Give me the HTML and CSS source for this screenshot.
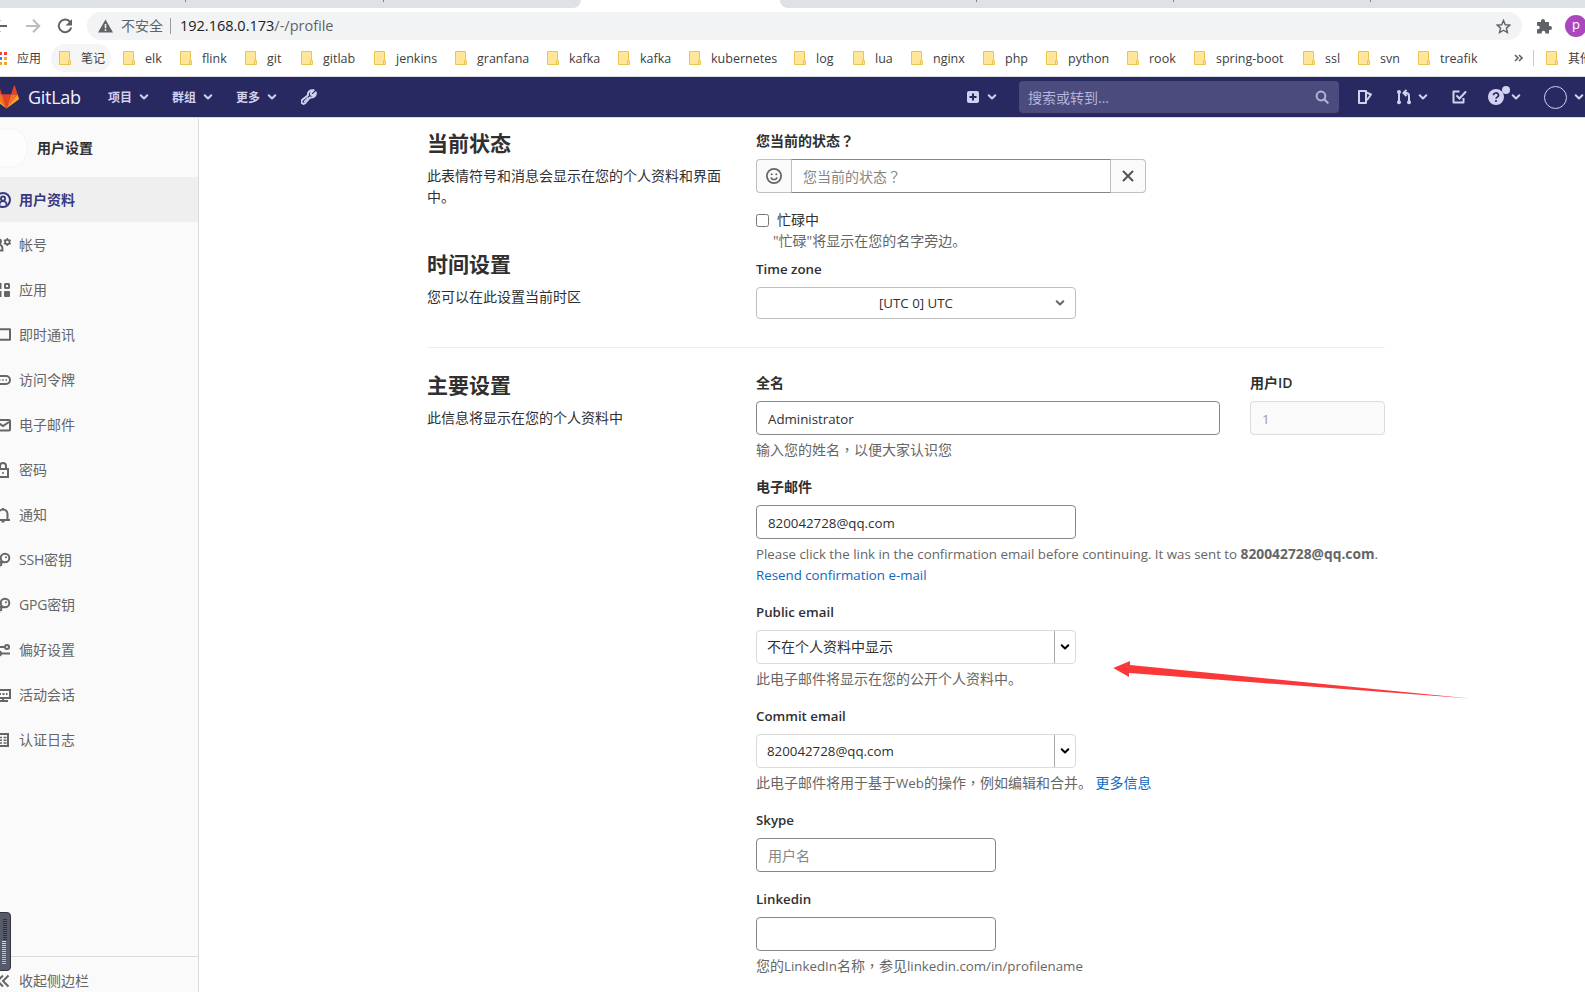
FILE: index.html
```
<!DOCTYPE html>
<html lang="zh-CN">
<head>
    <meta charset="UTF-8">
    <meta name="viewport" content="width=device-width, initial-scale=1.0">
    <title>用户资料 · GitLab</title>
    <link rel="stylesheet" href="styles.css">
</head>
<body>

    <!-- shared icons -->
    <svg class="sprite" width="0" height="0">
        <symbol id="chevron" viewBox="0 0 10 10"><path d="M1.7 3.3 5 6.500l3.300-3.200" fill="none" stroke="currentColor" stroke-width="2" stroke-linecap="round" stroke-linejoin="round"/></symbol>
        <symbol id="folder" viewBox="0 0 12 14"><path d="M.5.5h10v9.200h1v3.800H.5z" fill="#ffe699" stroke="#e9c44f"/><path d="M9.500 13V9.700h1" fill="none" stroke="#e9c44f"/></symbol>
        <symbol id="key" viewBox="0 0 16 16"><circle cx="10" cy="6" r="4.300" fill="none" stroke="currentColor" stroke-width="2"/><circle cx="11" cy="5.200" r="1" fill="currentColor"/><path d="M6.600 8.800 2 13.200V15h2.400v-1.800h1.800v-2l1.800-1" fill="none" stroke="currentColor" stroke-width="1.700"/></symbol>
    </svg>

    <div class="tabstrip">
        <div class="tabs tabs-left"><i></i><i></i></div>
        <div class="tabs tabs-right"><i></i><i></i><i></i></div>
    </div>

    <div class="toolbar">
        <div class="toolbar-nav">
            <svg class="back" width="16" height="16" viewBox="0 0 16 16"><path d="M15 8H2M8 1.700 1.700 8 8 14.300" fill="none" stroke="#5f6368" stroke-width="2"/></svg>
            <svg class="forward" width="16" height="16" viewBox="0 0 16 16"><path d="M1 8h13M8 1.700 14.300 8 8 14.300" fill="none" stroke="#babcbe" stroke-width="2"/></svg>
            <svg class="reload" width="16" height="16" viewBox="0 0 16 16"><path d="M13.200 4.200A6.300 6.300 0 1 0 14.200 9.500" fill="none" stroke="#5f6368" stroke-width="2"/><path d="M15 1v6.400H8.600z" fill="#5f6368"/></svg>
        </div>
        <div class="omnibox">
            <svg width="15" height="14" viewBox="0 0 15 14"><path d="M7.500.5 15 13.500H0z" fill="#5f6368"/><path d="M7.500 5v4.300M7.500 10.300v1.600" stroke="#f1f3f4" stroke-width="1.600"/></svg>
            <span class="insecure">不安全</span>
            <span class="url">192.168.0.173<em>/-/profile</em></span>
            <svg class="star" width="15" height="15" viewBox="0 0 16 16"><path d="m8 1.500 1.900 4.600 4.900.4-3.700 3.200 1.100 4.800L8 12l-4.200 2.500 1.100-4.800L1.200 6.500l4.900-.4z" fill="none" stroke="#5f6368" stroke-width="1.500"/></svg>
        </div>
        <svg class="puzzle" width="16" height="16" viewBox="0 0 16 16"><path d="M1 4h4V3a2 2 0 0 1 4 0v1h4v4h1a2 2 0 0 1 0 4h-1v3.500H9.300v-1a1.800 1.800 0 0 0-3.600 0v1H1v-4.200h1a1.700 1.700 0 0 0 0-3.500H1z" fill="#5f6368"/></svg>
        <div class="profile">p</div>
    </div>

    <div class="bookmarks">
        <div class="apps">
            <svg width="8" height="13" viewBox="0 0 8 13"><path d="M0 0h2v3H0zM4 0h3v3H4z" fill="#ee4337"/><path d="M0 5h2v3H0z" fill="#2a84f5"/><path d="M4 5h3v3H4zM0 10h2v3H0zM4 10h3v3H4z" fill="#f5a623"/></svg>
            <span>应用</span>
        </div>
        <div class="bookmark-list">
            <a class="bookmark hover"><svg width="12" height="14"><use href="#folder"/></svg><span class="cn">笔记</span></a>
            <a class="bookmark"><svg width="12" height="14"><use href="#folder"/></svg><span>elk</span></a>
            <a class="bookmark"><svg width="12" height="14"><use href="#folder"/></svg><span>flink</span></a>
            <a class="bookmark"><svg width="12" height="14"><use href="#folder"/></svg><span>git</span></a>
            <a class="bookmark"><svg width="12" height="14"><use href="#folder"/></svg><span>gitlab</span></a>
            <a class="bookmark"><svg width="12" height="14"><use href="#folder"/></svg><span>jenkins</span></a>
            <a class="bookmark"><svg width="12" height="14"><use href="#folder"/></svg><span>granfana</span></a>
            <a class="bookmark"><svg width="12" height="14"><use href="#folder"/></svg><span>kafka</span></a>
            <a class="bookmark"><svg width="12" height="14"><use href="#folder"/></svg><span>kafka</span></a>
            <a class="bookmark"><svg width="12" height="14"><use href="#folder"/></svg><span>kubernetes</span></a>
            <a class="bookmark"><svg width="12" height="14"><use href="#folder"/></svg><span>log</span></a>
            <a class="bookmark"><svg width="12" height="14"><use href="#folder"/></svg><span>lua</span></a>
            <a class="bookmark"><svg width="12" height="14"><use href="#folder"/></svg><span>nginx</span></a>
            <a class="bookmark"><svg width="12" height="14"><use href="#folder"/></svg><span>php</span></a>
            <a class="bookmark"><svg width="12" height="14"><use href="#folder"/></svg><span>python</span></a>
            <a class="bookmark"><svg width="12" height="14"><use href="#folder"/></svg><span>rook</span></a>
            <a class="bookmark"><svg width="12" height="14"><use href="#folder"/></svg><span>spring-boot</span></a>
            <a class="bookmark"><svg width="12" height="14"><use href="#folder"/></svg><span>ssl</span></a>
            <a class="bookmark"><svg width="12" height="14"><use href="#folder"/></svg><span>svn</span></a>
            <a class="bookmark"><svg width="12" height="14"><use href="#folder"/></svg><span>treafik</span></a>
        </div>
        <svg class="more" width="9" height="8" viewBox="0 0 9 8"><path d="m1 1 3 3-3 3M5 1l3 3-3 3" fill="none" stroke="#5f6368" stroke-width="1.600"/></svg>
        <a class="bookmark other"><svg width="12" height="14"><use href="#folder"/></svg><span class="cn">其他书签</span></a>
    </div>

    <header class="navbar">
        <svg class="logo" width="25" height="24" viewBox="0 0 25 24">
            <path d="m12.500 23.500 4.600-14.200H7.900z" fill="#e24329"/>
            <path d="M12.500 23.500 7.900 9.300H1.400z" fill="#fc6d26"/>
            <path d="M1.400 9.300 0 13.600c-.1.400 0 .8.300 1l12.200 8.900z" fill="#fca326"/>
            <path d="M1.400 9.300h6.500L5.100.7c-.1-.4-.7-.4-.9 0z" fill="#e24329"/>
            <path d="m12.500 23.500 4.600-14.200h6.500z" fill="#fc6d26"/>
            <path d="m23.600 9.300 1.400 4.300c.1.400 0 .8-.3 1l-12.200 8.900z" fill="#fca326"/>
            <path d="M23.600 9.300h-6.500L19.900.7c.1-.4.700-.4.900 0z" fill="#e24329"/>
        </svg>
        <span class="brand">GitLab</span>
        <nav class="menu">
            <a>项目<svg width="10" height="10"><use href="#chevron"/></svg></a>
            <a>群组<svg width="10" height="10"><use href="#chevron"/></svg></a>
            <a>更多<svg width="10" height="10"><use href="#chevron"/></svg></a>
        </nav>
        <svg class="wrench" width="16" height="16" viewBox="0 0 16 16"><path d="M12.600 1.300 9.800 4.100l.4 1.700 1.700.4 2.900-2.800c.5 2.900-1.600 5.400-4.600 5.200l-1.100-.2-5 5.700a2.100 2.100 0 0 1-3.100-3L7 6.200C6.300 3 9.300.5 12.600 1.300z" fill="none" stroke="currentColor" stroke-width="2" stroke-linejoin="round"/><path d="m3 13 4.300-4.600" stroke="currentColor" stroke-width="1.200"/></svg>
        <div class="new">
            <svg width="12" height="12" viewBox="0 0 12 12"><rect width="12" height="12" rx="2" fill="currentColor"/><path d="M6 2.500v7M2.500 6h7" stroke="#292961" stroke-width="2"/></svg>
            <svg width="10" height="10"><use href="#chevron"/></svg>
        </div>
        <div class="search">
            <span>搜索或转到...</span>
            <svg width="14" height="14" viewBox="0 0 14 14"><circle cx="6" cy="6" r="4.400" fill="none" stroke="currentColor" stroke-width="2"/><path d="m9.200 9.200 3.500 3.500" stroke="currentColor" stroke-width="2" stroke-linecap="round"/></svg>
        </div>
        <div class="tools">
            <svg width="16" height="16" viewBox="0 0 16 16"><path d="M2 2h7v12H2zM9.500 3.500l4.500 2-4 5.500" fill="none" stroke="currentColor" stroke-width="2" stroke-linejoin="round"/></svg>
            <span class="tool-menu">
                <svg width="16" height="16" viewBox="0 0 16 16"><path d="M3 3v11M13 14V7a3 3 0 0 0-3-3H8M10.500 1 7.500 4l3 3" fill="none" stroke="currentColor" stroke-width="2"/><circle cx="3" cy="3" r="2" fill="currentColor"/><circle cx="3" cy="13.200" r="2" fill="currentColor"/><circle cx="13" cy="13.200" r="2" fill="currentColor"/></svg>
                <svg width="10" height="10"><use href="#chevron"/></svg>
            </span>
            <svg class="todo" width="16" height="16" viewBox="0 0 16 16"><path d="M8.500 2.500H2.500v11h10V9" fill="none" stroke="currentColor" stroke-width="2" stroke-linejoin="round"/><path d="m6 7 2.500 2.500 6-6.500" fill="none" stroke="currentColor" stroke-width="2" stroke-linecap="round"/></svg>
            <span class="tool-menu help-menu">
                <svg width="16" height="16" viewBox="0 0 16 16"><circle cx="8" cy="8" r="8" fill="currentColor"/><path d="M5.500 6.300a2.500 2.200 0 1 1 3.700 1.800C8.300 8.700 8 9 8 9.800" fill="none" stroke="#292961" stroke-width="1.700"/><circle cx="8" cy="12" r="1.100" fill="#292961"/></svg>
                <i class="dot"></i>
                <svg width="10" height="10"><use href="#chevron"/></svg>
            </span>
            <span class="avatar"></span>
            <svg class="last" width="10" height="10"><use href="#chevron"/></svg>
        </div>
    </header>

    <div class="page">
        <aside class="sidebar">
            <div class="context"><span class="context-avatar"></span><strong>用户设置</strong></div>
            <ul class="side-menu">
                <li class="active"><svg viewBox="0 0 16 16"><circle cx="8" cy="8" r="7" fill="none" stroke="currentColor" stroke-width="2"/><circle cx="8" cy="6.600" r="2.100" fill="none" stroke="currentColor" stroke-width="1.800"/><path d="M4.500 13v-1a3.500 3 0 0 1 7 0v1" fill="none" stroke="currentColor" stroke-width="1.800"/></svg>用户资料</li>
                <li><svg viewBox="0 0 16 16"><circle cx="4" cy="4.500" r="2" fill="none" stroke="currentColor" stroke-width="2"/><path d="M1 13.500V11a3.200 3.200 0 0 1 6.400 0v2.500z" fill="none" stroke="currentColor" stroke-width="2"/><circle cx="12.300" cy="5" r="2.200" fill="none" stroke="currentColor" stroke-width="1.800"/><path d="M12.300 1v2M12.300 7v2M8.900 3l1.500.9M14.200 6.100l1.500.9M8.900 7l1.500-.9M14.200 3.900l1.500-.9" stroke="currentColor" stroke-width="1.500"/></svg>帐号</li>
                <li><svg viewBox="0 0 16 16"><path d="M1.500 1h5v6h-5zM1.500 9h5v6h-5z" fill="currentColor"/><rect x="10" y="2" width="4" height="4" fill="none" stroke="currentColor" stroke-width="2" rx=".5"/><rect x="9" y="9" width="6" height="6" rx="1" fill="currentColor"/></svg>应用</li>
                <li><svg viewBox="0 0 16 16"><path d="M1 2.200h14v10.600H5L2 15.500v-2.700H1z" fill="none" stroke="currentColor" stroke-width="2" stroke-linejoin="round"/></svg>即时通讯</li>
                <li><svg viewBox="0 0 16 16"><rect x="1" y="4" width="14" height="8" rx="4" fill="none" stroke="currentColor" stroke-width="2"/><path d="M4 8h1.500M7.200 8h1.500M10.500 8H12" stroke="currentColor" stroke-width="1.500"/></svg>访问令牌</li>
                <li><svg viewBox="0 0 16 16"><rect x="1" y="3" width="14" height="10.500" rx="1" fill="none" stroke="currentColor" stroke-width="2"/><path d="m2 5 6 4 6-4" fill="none" stroke="currentColor" stroke-width="2"/></svg>电子邮件</li>
                <li><svg viewBox="0 0 16 16"><path d="M3 7h10v8H3zM5 7V4a3 3 0 0 1 6 0v3" fill="none" stroke="currentColor" stroke-width="2"/><circle cx="8" cy="11" r="1" fill="currentColor"/></svg>密码</li>
                <li><svg viewBox="0 0 16 16"><path d="M3.500 12.500V7a4.500 4.500 0 0 1 9 0v5.500M1 12.900h14M8 1v2M6.500 14.500h3" fill="none" stroke="currentColor" stroke-width="2"/></svg>通知</li>
                <li><svg><use href="#key"/></svg><span>SSH密钥</span></li>
                <li><svg><use href="#key"/></svg><span>GPG密钥</span></li>
                <li><svg viewBox="0 0 16 16"><path d="M0 5h9M6 11.500h9" stroke="currentColor" stroke-width="2"/><circle cx="12" cy="5" r="2" fill="none" stroke="currentColor" stroke-width="2"/><circle cx="4" cy="11.500" r="2" fill="none" stroke="currentColor" stroke-width="2"/></svg>偏好设置</li>
                <li><svg viewBox="0 0 16 16"><path d="M1 3h14v8H1zM8 11v3M3 14h10" fill="none" stroke="currentColor" stroke-width="2"/><path d="M4 7h2M7.500 7h2M11 7h1.500" stroke="currentColor" stroke-width="2"/></svg>活动会话</li>
                <li><svg viewBox="0 0 16 16"><path d="M3 2h10v12H3z" fill="none" stroke="currentColor" stroke-width="2"/><path d="M5 5.500h2M8.500 5.500h3M5 8.200h2M8.500 8.200h3M5 11h2M8.500 11h3" stroke="currentColor" stroke-width="1.500"/></svg>认证日志</li>
            </ul>
            <div class="collapse"><svg viewBox="0 0 16 16"><path d="M8 2.500 2.500 8 8 13.500M13.500 2.500 8 8l5.500 5.500" fill="none" stroke="currentColor" stroke-width="2"/></svg>收起侧边栏</div>
        </aside>

        <main class="content">
            <section class="row">
                <div class="intro">
                    <h4>当前状态</h4>
                    <p>此表情符号和消息会显示在您的个人资料和界面中。</p>
                </div>
                <div class="fields">
                    <label>您当前的状态<span class="tc" lang="zh-TW">？</span></label>
                    <div class="input-group">
                        <span class="addon"><svg width="16" height="16" viewBox="0 0 16 16"><circle cx="8" cy="8" r="7.100" fill="none" stroke="currentColor" stroke-width="1.800"/><circle cx="5.700" cy="6.300" r="1" fill="currentColor"/><circle cx="10.300" cy="6.300" r="1" fill="currentColor"/><path d="M5.200 9.200a2.800 2.400 0 0 0 5.600 0" fill="none" stroke="currentColor" stroke-width="1.500"/></svg></span>
                        <div class="control placeholder">您当前的状态<span class="tc" lang="zh-TW">？</span></div>
                        <span class="addon"><svg width="12" height="12" viewBox="0 0 12 12"><path d="m1.500 1.500 9 9M10.500 1.500l-9 9" stroke="currentColor" stroke-width="2" stroke-linecap="round"/></svg></span>
                    </div>
                    <div class="check"><input type="checkbox"><span>忙碌中</span></div>
                    <div class="check-help">"忙碌"将显示在您的名字旁边。</div>
                </div>
            </section>

            <section class="row timezone">
                <div class="intro">
                    <h4>时间设置</h4>
                    <p>您可以在此设置当前时区</p>
                </div>
                <div class="fields">
                    <label class="en">Time zone</label>
                    <div class="dropdown"><span>[UTC 0] UTC</span><svg width="10" height="10"><use href="#chevron"/></svg></div>
                </div>
            </section>

            <hr>

            <section class="row">
                <div class="intro">
                    <h4>主要设置</h4>
                    <p>此信息将显示在您的个人资料中</p>
                </div>
                <div class="fields">
                    <div class="name-row">
                        <div class="group">
                            <label>全名</label>
                            <div class="control en">Administrator</div>
                            <div class="help">输入您的姓名<span class="tc" lang="zh-TW">，</span>以便大家认识您</div>
                        </div>
                        <div class="group">
                            <label>用户ID</label>
                            <div class="control disabled en">1</div>
                        </div>
                    </div>
                    <div class="group">
                        <label>电子邮件</label>
                        <div class="control md en">820042728@qq.com</div>
                        <div class="help en">Please click the link in the confirmation email before continuing. It was sent to <b>820042728@qq.com</b>.<br><a>Resend confirmation e-mail</a></div>
                    </div>
                    <div class="group">
                        <label class="en">Public email</label>
                        <div class="select"><span>不在个人资料中显示</span><i><svg width="10" height="10"><use href="#chevron"/></svg></i></div>
                        <div class="help">此电子邮件将显示在您的公开个人资料中。</div>
                    </div>
                    <div class="group">
                        <label class="en">Commit email</label>
                        <div class="select en"><span>820042728@qq.com</span><i><svg width="10" height="10"><use href="#chevron"/></svg></i></div>
                        <div class="help">此电子邮件将用于基于<span class="en">Web</span>的操作<span class="tc" lang="zh-TW">，</span>例如编辑和合并。 <a>更多信息</a></div>
                    </div>
                    <div class="group">
                        <label class="en">Skype</label>
                        <div class="control sm placeholder">用户名</div>
                    </div>
                    <div class="group">
                        <label class="en">Linkedin</label>
                        <div class="control sm"></div>
                        <div class="help">您的<span class="en">LinkedIn</span>名称<span class="tc" lang="zh-TW">，</span>参见<span class="en">linkedin.com/in/profilename</span></div>
                    </div>
                </div>
            </section>
        </main>
    </div>

    <!-- red pointer over the form -->
    <svg class="arrow" width="360" height="40" viewBox="0 0 360 40"><path d="m1.300 8 16.700-7v4l340 33.500L17 13v4z" fill="#fb3838"/></svg>

    <!-- floating level meter -->
    <div class="meter"><i class="off"></i><i class="on"></i></div>

</body>
</html>
```
FILE: styles.css
```
* {
    box-sizing: border-box;
}
body {
    margin: 0;
    height: 992px;
    overflow: hidden;
    position: relative;
    background: #fff;
    color: #303030;
    font-family: "Open Sans", "Noto Sans CJK SC", sans-serif;
    font-size: 14px;
    line-height: 21px;
}
svg {
    display: block;
    flex: none;
}
.sprite {
    position: absolute;
}
.en {
    font-size: 13.3px;
}
.tc {
    font-family: "Noto Sans CJK TC", sans-serif;
    line-height: 1;
}

/* browser chrome */
.tabstrip {
    height: 8px;
    display: flex;
    justify-content: space-between;
}
.tabs {
    display: flex;
    height: 8px;
    background: #dee1e6;
}
.tabs i {
    width: 1px;
    height: 2px;
    background: #808387;
}
.tabs-left {
    width: 581px;
    padding-left: 185px;
    gap: 197px;
    border-bottom-right-radius: 8px;
}
.tabs-right {
    width: 805px;
    padding-left: 196px;
    gap: 196px;
    border-bottom-left-radius: 8px;
}
.toolbar {
    height: 36px;
    padding-top: 4px;
    display: flex;
}
.toolbar-nav {
    width: 87px;
    height: 28px;
    flex: none;
    display: flex;
    align-items: center;
}
.back {
    margin-left: -8px;
}
.forward {
    margin-left: 17px;
}
.reload {
    margin-left: 16px;
}
.omnibox {
    width: 1435px;
    height: 28px;
    flex: none;
    border-radius: 14px;
    background: #f1f3f4;
    padding: 0 11px;
    display: flex;
    align-items: center;
    color: #5f6368;
}
.insecure {
    margin-left: 8px;
    padding-right: 7px;
    line-height: 16px;
    border-right: 1px solid #9a9da0;
}
.url {
    margin-left: 9px;
    padding-bottom: 2px;
    color: #202124;
    font-size: 14.5px;
}
.url em {
    font-style: normal;
    color: #5f6368;
}
.star {
    margin-left: auto;
}
.puzzle {
    margin: 6px 0 0 14px;
}
.profile {
    width: 22px;
    height: 22px;
    margin: 3px 0 0 13px;
    border-radius: 50%;
    background: #ab47bc;
    color: #fff;
    font-size: 13px;
    line-height: 19px;
    text-align: center;
    flex: none;
}
.bookmarks {
    height: 33px;
    padding-bottom: 4px;
    border-bottom: 1px solid #dadce0;
    display: flex;
    align-items: center;
    font-size: 12.5px;
    color: #3c4043;
}
.apps {
    width: 51px;
    flex: none;
    font-size: 12px;
    display: flex;
    align-items: center;
    gap: 9px;
}
.bookmark-list {
    width: 1463px;
    flex: none;
    display: grid;
    grid-template-columns: 64px 57px 65px 56px 73px 81px 92px 71px 71px 105px 59px 58px 72px 63px 81px 67px 109px 55px 60px 80px;
}
.bookmark {
    height: 28px;
    padding-left: 8px;
    display: flex;
    align-items: center;
    gap: 10px;
    white-space: nowrap;
}
.bookmark .cn {
    font-size: 12px;
}
.hover {
    width: 60px;
    border-radius: 14px;
    background: #f5f5f6;
}
.other {
    height: 16px;
    margin-left: 10px;
    padding-left: 12px;
    border-left: 1px solid #c8cacd;
}

/* gitlab header */
.navbar {
    height: 41px;
    border-bottom: 1px solid #dbdbdb;
    background: #292961;
    color: #d1d1f0;
    display: flex;
    align-items: center;
}
.logo {
    margin-left: -6px;
}
.brand {
    width: 80px;
    margin-left: 9px;
    color: #f1f1ff;
    font-size: 18px;
    letter-spacing: -.3px;
}
.menu {
    display: flex;
    font-size: 12px;
    font-weight: bold;
}
.menu a {
    width: 64px;
    display: flex;
    align-items: center;
    gap: 7px;
}
.wrench {
    margin-left: 1px;
}
.new {
    margin-left: 650px;
    display: flex;
    align-items: center;
    gap: 8px;
}
.search {
    width: 320px;
    height: 32px;
    margin-left: 22px;
    padding: 0 10px 0 9px;
    border-radius: 4px;
    background: #4c4b7d;
    color: #b4b4dc;
    display: flex;
    align-items: center;
    justify-content: space-between;
}
.tools {
    margin-left: 18px;
    display: flex;
    align-items: center;
}
.tool-menu {
    margin-left: 23px;
    display: flex;
    align-items: center;
    gap: 6px;
}
.todo {
    margin-left: 23px;
}
.help-menu {
    position: relative;
    margin-left: 21px;
    gap: 7px;
}
.dot {
    position: absolute;
    left: 14px;
    top: -3px;
    width: 8px;
    height: 8px;
    border-radius: 50%;
    background: #d1d1f0;
}
.avatar {
    width: 23px;
    height: 23px;
    margin-left: 23px;
    border: 1px solid #d1d1f0;
    border-radius: 50%;
    flex: none;
}
.last {
    margin-left: 7px;
}

.page {
    height: 874px;
    display: flex;
}

/* sidebar */
.sidebar {
    width: 199px;
    flex: none;
    display: flex;
    flex-direction: column;
    background: #fafafa;
    border-right: 1px solid #dbdbdb;
    color: #666;
}
.context {
    height: 59px;
    display: flex;
    align-items: center;
    gap: 9px;
    color: #303030;
}
.context-avatar {
    width: 40px;
    height: 40px;
    flex: none;
    margin-left: -12px;
    border: 1px solid #f4f4f4;
    border-radius: 50%;
    background: #fdfdfd;
}
.context strong {
    font-weight: 600;
}
.side-menu {
    margin: 0;
    padding: 0;
    list-style: none;
}
.side-menu li, .collapse {
    height: 45px;
    display: flex;
    align-items: center;
    gap: 8px;
}
.side-menu svg, .collapse svg {
    width: 16px;
    height: 16px;
    margin-left: -5px;
}
.side-menu .active {
    background: #efefef;
    color: #393982;
    font-weight: 600;
}
.side-menu span {
    letter-spacing: -.2px;
}
.collapse {
    height: 36px;
    margin-top: auto;
    padding-top: 12px;
    border-top: 1px solid #dbdbdb;
}

/* settings form */
.content {
    padding: 12px 0 0 228px;
    width: 1186px;
    flex: none;
}
.row {
    display: grid;
    grid-template-columns: 297px 629px;
    column-gap: 32px;
}
.timezone .fields {
    padding-top: 7px;
}
h4 {
    margin: 0 0 8px;
    font-size: 21px;
    line-height: 27px;
    font-weight: bold;
}
p {
    margin: 0;
}
label {
    display: block;
    height: 21px;
    margin-bottom: 8px;
    font-weight: 600;
}
label.en {
    padding-top: 1px;
}
.control {
    height: 34px;
    padding: 0 11px;
    border: 1px solid #868686;
    border-radius: 4px;
    line-height: 33px;
}
.control.en {
    line-height: 34px;
}
.md {
    width: 320px;
}
.sm {
    width: 240px;
}
.placeholder {
    color: #868686;
}
.disabled {
    background: #fafafa;
    border-color: #dbdbdb;
    color: #999;
}
.input-group {
    width: 390px;
    display: flex;
}
.input-group .control {
    flex: 1;
    border-radius: 0;
    border-left-color: #bfbfbf;
    border-right-color: #bfbfbf;
}
.addon {
    width: 35px;
    display: flex;
    align-items: center;
    justify-content: center;
    border: 1px solid #bfbfbf;
    border-right: 0;
    border-radius: 4px 0 0 4px;
    background: #fafafa;
    color: #666;
}
.addon:last-child {
    border: 1px solid #bfbfbf;
    border-left: 0;
    border-radius: 0 4px 4px 0;
    color: #535353;
}
.check {
    margin-top: 16px;
    display: flex;
    align-items: center;
    gap: 8px;
}
.check input {
    width: 13px;
    height: 13px;
    margin: 1px 0 0;
}
.check-help {
    padding-left: 17px;
    color: #666;
}
.dropdown {
    width: 320px;
    height: 32px;
    padding: 0 10px 0 20px;
    border: 1px solid #bfbfbf;
    border-radius: 4px;
    display: flex;
    align-items: center;
    font-size: 13.3px;
}
.dropdown span {
    flex: 1;
    text-align: center;
}
.dropdown svg {
    color: #666;
}
hr {
    margin: 28px 0 24px;
    border: 0;
    border-top: 1px solid #eee;
}
.name-row {
    display: grid;
    grid-template-columns: 464px 135px;
    column-gap: 30px;
}
.group {
    margin-bottom: 16px;
}
.help {
    height: 21px;
    margin-top: 4px;
    color: #666;
    white-space: nowrap;
}
.help.en {
    height: 42px;
    padding-top: 1px;
}
.help b {
    font-size: 13.8px;
    line-height: 1;
}
.help a {
    color: #1068bf;
}
.select {
    width: 320px;
    height: 34px;
    border: 1px solid #dbdbdb;
    border-radius: 4px;
    display: flex;
    line-height: 32px;
}
.select span {
    flex: 1;
    padding-left: 10px;
}
.select i {
    width: 21px;
    border-left: 1px solid #aaa;
    display: flex;
    align-items: center;
    justify-content: center;
    color: #000;
}

.arrow {
    position: absolute;
    left: 1112px;
    top: 660px;
}
.meter {
    position: absolute;
    left: -4px;
    top: 912px;
    width: 15px;
    height: 59px;
    padding: 6px 4px 0 5px;
    border: 1px solid #33343f;
    border-radius: 4px;
    background: #565a69;
}
.meter i {
    display: block;
    width: 4px;
}
.meter .off {
    height: 21px;
    margin-left: 1px;
    background: repeating-linear-gradient(#2f303b 0 1px, #565a69 1px 2px);
}
.meter .on {
    height: 24px;
    margin-top: 1px;
    background: repeating-linear-gradient(transparent 0 1px, #565a69 1px 2px), linear-gradient(#e8e67a, #8fe89a, #5fe6e6);
}
```
